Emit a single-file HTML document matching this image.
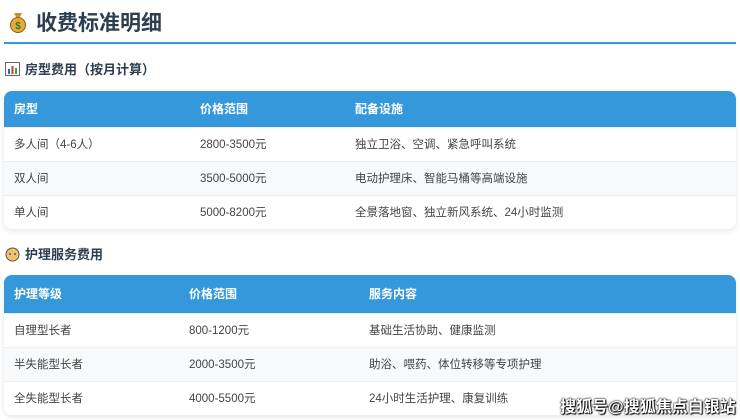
<!DOCTYPE html>
<html><head><meta charset="utf-8"><style>
*{margin:0;padding:0;box-sizing:border-box}
body{width:740px;height:420px;background:#fff;font-family:"Liberation Sans","Noto Sans CJK SC",sans-serif;color:#333;position:relative;overflow:hidden}
.h1{position:absolute;left:8px;top:7px;font-size:21px;font-weight:bold;color:#2c3e50;display:flex;align-items:center}
.line{position:absolute;left:4px;top:42px;width:732px;height:2px;background:#3498db}
.h2{position:absolute;left:5px;font-size:13px;font-weight:bold;color:#2c3e50;display:flex;align-items:center}
table{position:absolute;left:4px;width:732px;border-collapse:collapse;border-radius:8px;overflow:hidden;box-shadow:0 2px 6px rgba(0,0,0,.1)}
th{background:#3498db;color:#fff;font-size:12px;font-weight:bold;text-align:left;padding:0 0 0 10px}
td{font-size:11.5px;color:#444;padding:0 0 0 10px;height:34px;border-top:1px solid #eee;background:#fff}
tr:nth-child(odd) td{background:#f7f9fb}
.wm{position:absolute;left:560px;top:393px;font-size:16px;font-weight:bold;color:#fff;text-shadow:0 0 2px #000,0 0 1px #000,1px 1px 1px #000}
</style></head><body>
<div class="h1"><svg width="20" height="22" viewBox="0 0 20 22" style="margin-right:8px"><path d="M6 2h8l-2 4h-4z" fill="#c8902a"/><circle cx="10" cy="14" r="7.5" fill="#e8a93a" stroke="#8a5a12"/><text x="10" y="18" font-size="10" text-anchor="middle" fill="#2a7a2a" font-weight="bold">$</text></svg>收费标准明细</div>
<div class="line"></div>
<div class="h2" style="top:59px"><svg width="15" height="14" viewBox="0 0 15 14" style="margin-right:5px"><rect x=".5" y=".5" width="14" height="13" fill="#fff" stroke="#666"/><rect x="3" y="7" width="2" height="5" fill="#3366cc"/><rect x="6.5" y="4" width="2" height="8" fill="#dd3333"/><rect x="10" y="6" width="2" height="6" fill="#33aa33"/></svg>房型费用（按月计算）</div>
<table style="top:91px">
<tr style="height:36px"><th style="width:186px">房型</th><th style="width:155px">价格范围</th><th>配备设施</th></tr>
<tr><td>多人间（4-6人）</td><td>2800-3500元</td><td>独立卫浴、空调、紧急呼叫系统</td></tr>
<tr><td>双人间</td><td>3500-5000元</td><td>电动护理床、智能马桶等高端设施</td></tr>
<tr><td>单人间</td><td>5000-8200元</td><td>全景落地窗、独立新风系统、24小时监测</td></tr>
</table>
<div class="h2" style="top:244px"><svg width="15" height="16" viewBox="0 0 15 16" style="margin-right:5px"><circle cx="7.5" cy="8.5" r="6.5" fill="#f3c26b" stroke="#555"/><circle cx="5" cy="8" r="1" fill="#555"/><circle cx="10" cy="8" r="1" fill="#555"/></svg>护理服务费用</div>
<table style="top:275px">
<tr style="height:38px"><th style="width:175px">护理等级</th><th style="width:180px">价格范围</th><th>服务内容</th></tr>
<tr><td>自理型长者</td><td>800-1200元</td><td>基础生活协助、健康监测</td></tr>
<tr><td>半失能型长者</td><td>2000-3500元</td><td>助浴、喂药、体位转移等专项护理</td></tr>
<tr><td>全失能型长者</td><td>4000-5500元</td><td>24小时生活护理、康复训练</td></tr>
</table>
<div class="wm">搜狐号@搜狐焦点白银站</div>
</body></html>
